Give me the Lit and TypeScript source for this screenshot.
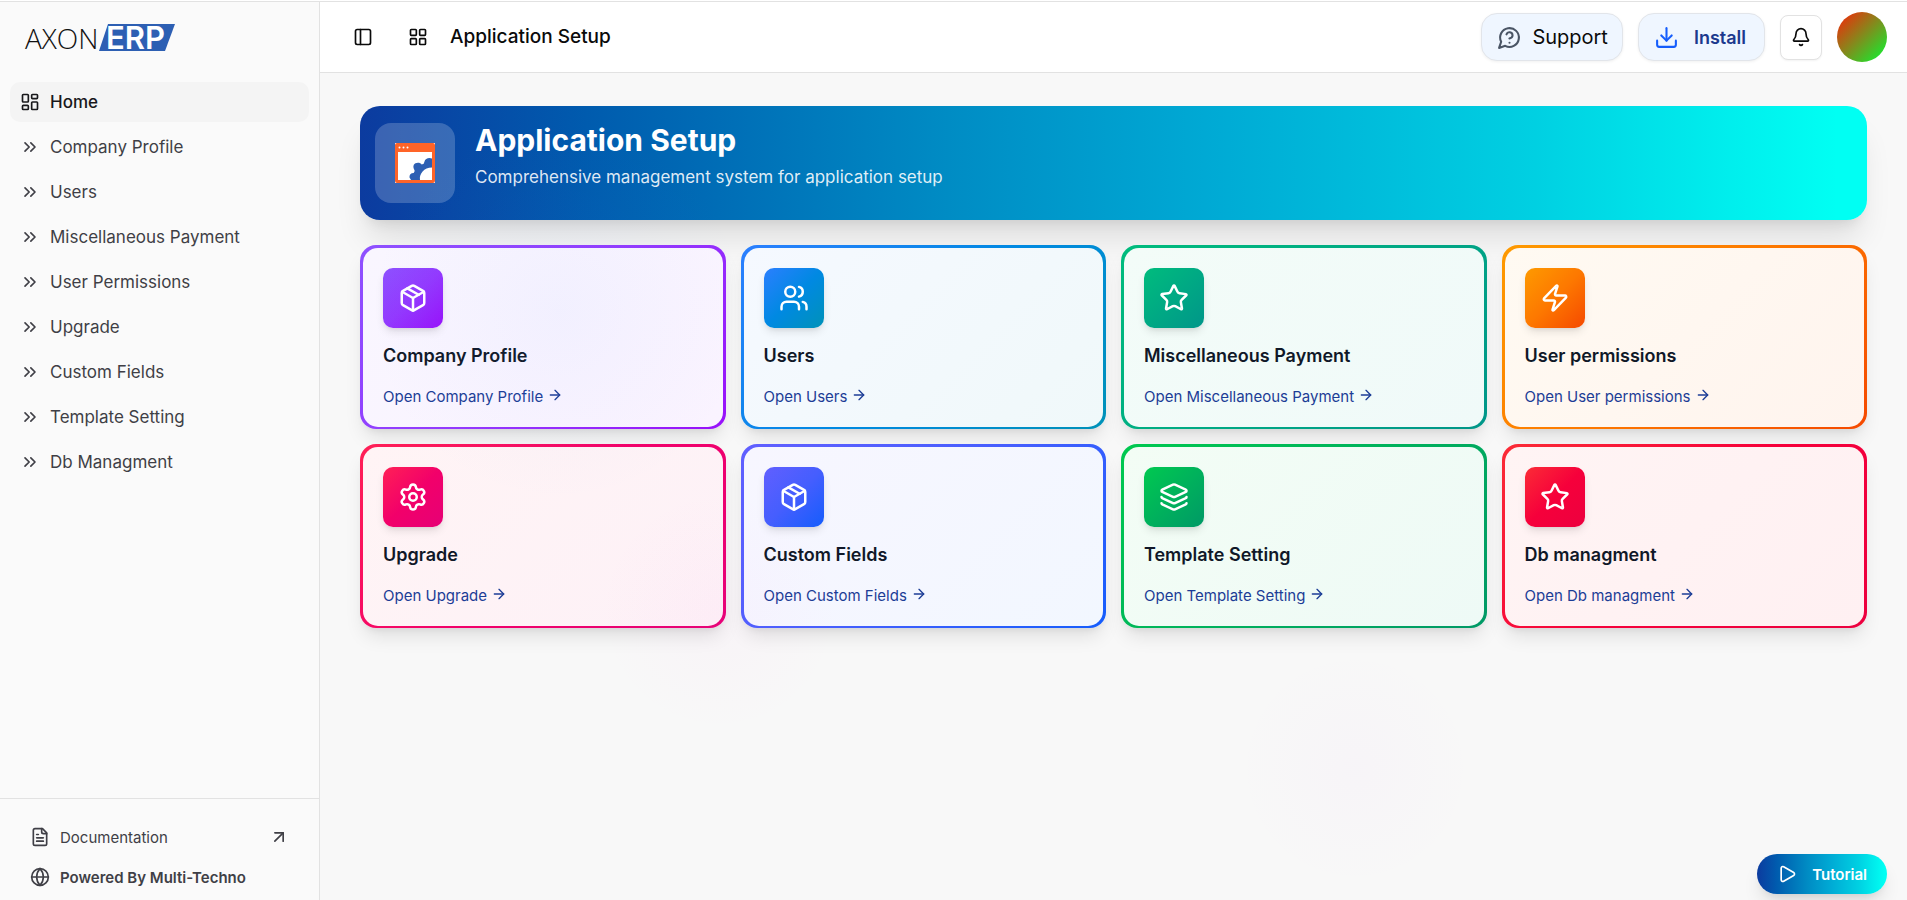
import { LitElement, html, svg, css, type SVGTemplateResult } from "lit";
import { customElement, property } from "lit/decorators.js";

const icons: Record<string, SVGTemplateResult> = {
  dashboard: svg`<rect width="7" height="9" x="3" y="3" rx="1"/><rect width="7" height="5" x="14" y="3" rx="1"/><rect width="7" height="9" x="14" y="12" rx="1"/><rect width="7" height="5" x="3" y="16" rx="1"/>`,
  chevrons: svg`<path d="m6 17 5-5-5-5"/><path d="m13 17 5-5-5-5"/>`,
  file: svg`<path d="M15 2H6a2 2 0 0 0-2 2v16a2 2 0 0 0 2 2h12a2 2 0 0 0 2-2V7Z"/><path d="M14 2v4a2 2 0 0 0 2 2h4"/><path d="M10 9H8"/><path d="M16 13H8"/><path d="M16 17H8"/>`,
  globe: svg`<circle cx="12" cy="12" r="10"/><path d="M12 2a14.5 14.5 0 0 0 0 20 14.5 14.5 0 0 0 0-20"/><path d="M2 12h20"/>`,
  arrowUpRight: svg`<path d="M7 7h10v10"/><path d="M7 17 17 7"/>`,
  panel: svg`<rect width="18" height="18" x="3" y="3" rx="2"/><path d="M9 3v18"/>`,
  grid: svg`<rect width="7" height="7" x="3" y="3" rx="1"/><rect width="7" height="7" x="14" y="3" rx="1"/><rect width="7" height="7" x="14" y="14" rx="1"/><rect width="7" height="7" x="3" y="14" rx="1"/>`,
  question: svg`<path d="M7.9 20A9 9 0 1 0 4 16.1L2 22Z"/><path d="M9.09 9a3 3 0 0 1 5.83 1c0 2-3 3-3 3"/><path d="M12 17h.01"/>`,
  download: svg`<path d="M21 15v4a2 2 0 0 1-2 2H5a2 2 0 0 1-2-2v-4"/><path d="m7 10 5 5 5-5"/><path d="M12 15V3"/>`,
  bell: svg`<path d="M10.268 21a2 2 0 0 0 3.464 0"/><path d="M3.262 15.326A1 1 0 0 0 4 17h16a1 1 0 0 0 .74-1.673C19.41 13.956 18 12.499 18 8A6 6 0 0 0 6 8c0 4.499-1.411 5.956-2.738 7.326"/>`,
  play: svg`<path d="M5 5a2 2 0 0 1 3.008-1.728l11.997 6.998a2 2 0 0 1 .003 3.458l-12 7A2 2 0 0 1 5 19z"/>`,
  arrowRight: svg`<path d="M5 12h14"/><path d="m12 5 7 7-7 7"/>`,
  package: svg`<path d="M11 21.73a2 2 0 0 0 2 0l7-4A2 2 0 0 0 21 16V8a2 2 0 0 0-1-1.73l-7-4a2 2 0 0 0-2 0l-7 4A2 2 0 0 0 3 8v8a2 2 0 0 0 1 1.73z"/><path d="M12 22V12"/><path d="M3.3 7 12 12l8.7-5"/><path d="m7.5 4.27 9 5.15"/>`,
  users: svg`<path d="M16 21v-2a4 4 0 0 0-4-4H6a4 4 0 0 0-4 4v2"/><circle cx="9" cy="7" r="4"/><path d="M22 21v-2a4 4 0 0 0-3-3.87"/><path d="M16 3.13a4 4 0 0 1 0 7.75"/>`,
  star: svg`<path d="M11.525 2.295a.53.53 0 0 1 .95 0l2.31 4.679a2.123 2.123 0 0 0 1.595 1.16l5.166.756a.53.53 0 0 1 .294.904l-3.736 3.638a2.123 2.123 0 0 0-.611 1.878l.882 5.14a.53.53 0 0 1-.771.56l-4.618-2.428a2.122 2.122 0 0 0-1.973 0L6.396 21.01a.53.53 0 0 1-.77-.56l.881-5.139a2.122 2.122 0 0 0-.611-1.879L2.16 9.795a.53.53 0 0 1 .294-.906l5.165-.755a2.122 2.122 0 0 0 1.597-1.16z"/>`,
  zap: svg`<path d="M4 14a1 1 0 0 1-.78-1.63l9.9-10.2a.5.5 0 0 1 .86.46l-1.92 6.02A1 1 0 0 0 13 10h7a1 1 0 0 1 .78 1.63l-9.9 10.2a.5.5 0 0 1-.86-.46l1.92-6.02A1 1 0 0 0 11 14z"/>`,
  settings: svg`<path d="M9.671 4.136a2.34 2.34 0 0 1 4.659 0 2.34 2.34 0 0 0 3.319 1.915 2.34 2.34 0 0 1 2.33 4.033 2.34 2.34 0 0 0 0 3.831 2.34 2.34 0 0 1-2.33 4.033 2.34 2.34 0 0 0-3.319 1.915 2.34 2.34 0 0 1-4.659 0 2.34 2.34 0 0 0-3.32-1.915 2.34 2.34 0 0 1-2.33-4.033 2.34 2.34 0 0 0 0-3.831A2.34 2.34 0 0 1 6.35 6.051a2.34 2.34 0 0 0 3.319-1.915"/><circle cx="12" cy="12" r="3"/>`,
  layers: svg`<path d="M12.83 2.18a2 2 0 0 0-1.66 0L2.6 6.08a1 1 0 0 0 0 1.83l8.58 3.91a2 2 0 0 0 1.66 0l8.58-3.9a1 1 0 0 0 0-1.83z"/><path d="M2 12a1 1 0 0 0 .58.91l8.6 3.91a2 2 0 0 0 1.65 0l8.58-3.9A1 1 0 0 0 22 12"/><path d="M2 17a1 1 0 0 0 .58.91l8.6 3.91a2 2 0 0 0 1.65 0l8.58-3.9A1 1 0 0 0 22 17"/>`,
};

@customElement("line-icon")
export class LineIcon extends LitElement {
  @property() name = "";
  static styles = css`
    :host { display: inline-flex; flex: none; width: 20px; height: 20px; }
    svg { width: 100%; height: 100%; fill: none; stroke: currentColor; stroke-width: 2; stroke-linecap: round; stroke-linejoin: round; }
  `;
  render() {
    return html`<svg viewBox="0 0 24 24" aria-hidden="true">${icons[this.name]}</svg>`;
  }
}

interface Module { title: string; icon: string; tone: string; }

@customElement("module-card")
export class ModuleCard extends LitElement {
  @property({ attribute: false }) module!: Module;
  static styles = css`
    :host { display: block; min-width: 0; }
    .card {
      --stroke: linear-gradient(135deg, var(--from), var(--via), var(--to));
      padding: 3px 3px 2px;
      border-radius: 16px;
      background: var(--stroke);
      box-shadow: 0 12px 19px -4px rgba(0, 0, 0, 0.1), 0 5px 8px -5px rgba(0, 0, 0, 0.1);
    }
    .body {
      padding: 20px 20px 18px;
      border-radius: 15px;
      background: linear-gradient(135deg, var(--tint-from), var(--tint-to));
    }
    .tile {
      display: flex; align-items: center; justify-content: center;
      width: 60px; height: 60px; border-radius: 10px; color: #fff;
      background: var(--stroke);
      box-shadow: 0 5px 8px -1px rgba(0, 0, 0, 0.1), 0 3px 5px -3px rgba(0, 0, 0, 0.1);
    }
    .tile line-icon { width: 30px; height: 30px; }
    h2 { margin: 16px 0 0; font-size: 18px; line-height: 24px; font-weight: 600; color: #101828; }
    a { display: inline-flex; align-items: center; gap: 4px; margin-top: 17px; font-size: 15px; line-height: 24px; color: #1c3d96; text-decoration: none; }
    a line-icon { width: 16px; height: 16px; margin-bottom: 4px; }
    .violet { --from: #8e51ff; --via: #9339fe; --to: #9810fa; --tint-from: #f9f6ff; --tint-to: #faf3ff; }
    .blue { --from: #2b7fff; --via: #0089e2; --to: #0092b8; --tint-from: #f5f9ff; --tint-to: #f0f9fa; }
    .emerald { --from: #00bc7d; --via: #00a984; --to: #009689; --tint-from: #f3fcf8; --tint-to: #f0faf9; }
    .amber { --from: #fe9a00; --via: #fd7800; --to: #f54900; --tint-from: #fffaf2; --tint-to: #fff4ee; }
    .rose { --from: #ff2056; --via: #f2006a; --to: #e60076; --tint-from: #fff4f5; --tint-to: #fdf1f7; }
    .indigo { --from: #615fff; --via: #455efe; --to: #155dfc; --tint-from: #f7f6ff; --tint-to: #f2f7ff; }
    .green { --from: #00c950; --via: #00b15c; --to: #009966; --tint-from: #f3fdf5; --tint-to: #eefaf6; }
    .red { --from: #fb2c36; --via: #f6003b; --to: #ec003f; --tint-from: #fff4f4; --tint-to: #fff0f2; }
  `;
  render() {
    const m = this.module;
    return html`<article class="card ${m.tone}">
      <div class="body">
        <div class="tile"><line-icon name=${m.icon}></line-icon></div>
        <h2>${m.title}</h2>
        <a href="#">Open ${m.title}<line-icon name="arrowRight"></line-icon></a>
      </div>
    </article>`;
  }
}

const links = ["Company Profile", "Users", "Miscellaneous Payment", "User Permissions", "Upgrade", "Custom Fields", "Template Setting", "Db Managment"];

const modules: Module[] = [
  { title: "Company Profile", icon: "package", tone: "violet" },
  { title: "Users", icon: "users", tone: "blue" },
  { title: "Miscellaneous Payment", icon: "star", tone: "emerald" },
  { title: "User permissions", icon: "zap", tone: "amber" },
  { title: "Upgrade", icon: "settings", tone: "rose" },
  { title: "Custom Fields", icon: "package", tone: "indigo" },
  { title: "Template Setting", icon: "layers", tone: "green" },
  { title: "Db managment", icon: "star", tone: "red" },
];

@customElement("app-root")
export class AppRoot extends LitElement {
  static styles = css`
    :host { display: block; font-family: Inter, "Liberation Sans", sans-serif; color: #0a0a0a; }
    * { box-sizing: border-box; }
    a { color: inherit; text-decoration: none; }
    button { font: inherit; color: inherit; cursor: pointer; }
    .shell { position: relative; overflow: hidden; min-height: 100vh; padding-top: 1px; display: grid; grid-template-columns: 320px minmax(0, 1fr); background: #fff; }
    .sidebar { display: flex; flex-direction: column; background: #fafafa; border-top: 1px solid #e2e2e2; border-right: 1px solid #e2e2e2; }
    .brand { display: block; padding: 10px 24px 20px; height: 80px; }
    .brand svg { display: block; width: 160px; height: 50px; overflow: visible; }
    .axon { font: 300 28px "Open Sans", sans-serif; fill: #111; }
    .erp { font: 600 31px Inter, sans-serif; fill: #fff; }
    .menu { display: flex; flex-direction: column; gap: 5px; padding: 0 10px; }
    .item { display: flex; align-items: center; gap: 10px; height: 40px; padding: 0 10px; border-radius: 10px; font-size: 17px; line-height: 24px; color: #3f3f46; }
    .item.active { background: #f4f4f4; color: #18181b; font-weight: 500; }
    .foot { margin-top: auto; border-top: 1px solid #e2e2e2; padding: 18px 30px 3px; color: #3f3f46; font-size: 15px; }
    .foot a { display: flex; align-items: center; gap: 10px; height: 40px; }
    .foot .strong { font-weight: 600; }
    .foot .out { margin-left: auto; }

    .main { display: flex; flex-direction: column; min-width: 0; border-top: 1px solid #e2e2e2; background: #f8f8f8; }
    .topbar { display: flex; align-items: center; height: 71px; padding: 0 20px 0 33px; background: #fff; border-bottom: 1px solid #e2e2e2; }
    .plain { display: flex; border: 0; background: none; padding: 0; margin-right: 35px; }
    .plain + .plain { margin-right: 22px; }
    .topbar h1 { margin: 0; font-size: 19px; line-height: 28px; font-weight: 500; color: #0a0a0a; }
    .actions { display: flex; align-items: center; gap: 15px; margin-left: auto; }
    .pill { display: flex; align-items: center; height: 48px; border: 1px solid #e2e5ea; border-radius: 16px; background: #eff6ff; box-shadow: 0 1px 3px rgba(0, 0, 0, 0.06); }
    .pill line-icon { width: 25px; height: 25px; }
    .support { gap: 10px; padding: 0 14px 0 15px; font-size: 20px; }
    .support line-icon { color: #4a5565; }
    .install { gap: 15px; padding: 0 18px 0 15px; font-size: 18px; font-weight: 600; color: #1c398e; }
    .install line-icon { color: #155dfc; }
    .bell { display: flex; align-items: center; justify-content: center; width: 42px; height: 45px; padding: 0; border: 1px solid #e2e2e2; border-radius: 8px; background: #fff; box-shadow: 0 1px 2px rgba(0, 0, 0, 0.05); }
    .avatar { width: 50px; height: 50px; padding: 0; border: 0; border-radius: 50%; background: linear-gradient(135deg, #f02a0a 5%, #10f030 95%); }

    .content { position: relative; flex: 1; padding: 33px 40px 40px; }
    .banner { display: flex; align-items: center; gap: 20px; min-height: 114px; padding: 0 15px; border-radius: 20px; color: #fff;
      background: linear-gradient(90deg, #0c3b9f 0%, #005bae 15%, #008cc4 39%, #00a9d4 56%, #00d0e2 78%, #00fff3 98%);
      box-shadow: 0 25px 31px -6px rgba(0, 0, 0, 0.1), 0 10px 13px -8px rgba(0, 0, 0, 0.1); }
    .badge { display: flex; align-items: center; justify-content: center; width: 80px; height: 80px; border-radius: 16px; background: rgba(255, 255, 255, 0.2); }
    .badge svg { width: 40px; height: 40px; }
    .headline { padding-bottom: 14px; }
    .headline h2 { margin: 0; font-size: 30px; line-height: 38px; font-weight: 700; }
    .headline p { margin: 4px 0 0; font-size: 17px; line-height: 28px; color: rgba(255, 255, 255, 0.88); }
    .cards { display: grid; grid-template-columns: repeat(4, minmax(0, 1fr)); gap: 15px; margin-top: 25px; }
    .glow { position: absolute; inset: 0; pointer-events: none;
      background:
        radial-gradient(circle 190px at 239px 238px, rgba(97, 150, 255, 0.05), transparent),
        radial-gradient(circle 120px at 399px 538px, rgba(246, 100, 220, 0.03), transparent),
        radial-gradient(circle 120px at 1035px 695px, rgba(193, 70, 255, 0.02), transparent); }
    .tutorial { position: absolute; right: 20px; bottom: 6px; display: flex; align-items: center; gap: 15px; height: 40px; padding: 0 20px; border: 0; border-radius: 20px; color: #fff; font-size: 15px; font-weight: 600;
      background: linear-gradient(90deg, #0c3b9f 0%, #005bae 15%, #008cc4 39%, #00a9d4 56%, #00d0e2 78%, #00fff3 98%);
      box-shadow: 0 12px 19px -4px rgba(0, 0, 0, 0.12), 0 5px 8px -5px rgba(0, 0, 0, 0.1); }
  `;

  render() {
    return html`<div class="shell">
      <aside class="sidebar">
        <a class="brand" href="#" aria-label="Axon ERP">
          <svg viewBox="0 0 160 50">
            <path d="M84 12h67l-10 27H75z" fill="#2d5fb3" />
            <text class="axon" x="1" y="37">AXON</text>
            <text class="erp" x="82" y="37">ERP</text>
          </svg>
        </a>
        <nav class="menu">
          <a class="item active" href="#"><line-icon name="dashboard"></line-icon>Home</a>
          ${links.map((l) => html`<a class="item" href="#"><line-icon name="chevrons"></line-icon>${l}</a>`)}
        </nav>
        <div class="foot">
          <a href="#"><line-icon name="file"></line-icon>Documentation<line-icon class="out" name="arrowUpRight"></line-icon></a>
          <a class="strong" href="#"><line-icon name="globe"></line-icon>Powered By Multi-Techno</a>
        </div>
      </aside>
      <div class="main">
        <header class="topbar">
          <button class="plain" aria-label="Toggle sidebar"><line-icon name="panel"></line-icon></button>
          <button class="plain" aria-label="Apps"><line-icon name="grid"></line-icon></button>
          <h1>Application Setup</h1>
          <div class="actions">
            <button class="pill support"><line-icon name="question"></line-icon>Support</button>
            <button class="pill install"><line-icon name="download"></line-icon>Install</button>
            <button class="bell" aria-label="Notifications"><line-icon name="bell"></line-icon></button>
            <button class="avatar" aria-label="Account"></button>
          </div>
        </header>
        <main class="content">
          <section class="banner">
            <div class="badge">
              <svg viewBox="0 0 40 40" aria-hidden="true">
                <path d="M0 0h40v40H0z" fill="#fff" />
                <path fill-rule="evenodd" fill="#ff6428" d="M2 0h36a2 2 0 0 1 2 2v36a2 2 0 0 1-2 2H2a2 2 0 0 1-2-2V2a2 2 0 0 1 2-2zM3 9v28h34V9z" />
                <circle cx="4.500" cy="4.500" r="1" fill="#fff" /><circle cx="8.500" cy="4.500" r="1" fill="#fff" /><circle cx="12.500" cy="4.500" r="1" fill="#fff" />
                <path fill="#2d5fb3" d="M37 15.500c-3-1.500-7 0-7.500 3l-.8 2.200-2 .8c-1.500-2.500-6.500-2.500-8 .5-1 2.500.5 4 1 6l-1 2c-3 0-4.500 2-4.200 4.500L16 37h9c-1-6 4-12.500 12-12.500z" />
              </svg>
            </div>
            <div class="headline">
              <h2>Application Setup</h2>
              <p>Comprehensive management system for application setup</p>
            </div>
          </section>
          <section class="cards">
            ${modules.map((m) => html`<module-card .module=${m}></module-card>`)}
          </section>
          <div class="glow"></div>
        </main>
      </div>
      <button class="tutorial"><line-icon name="play"></line-icon>Tutorial</button>
    </div>`;
  }
}
